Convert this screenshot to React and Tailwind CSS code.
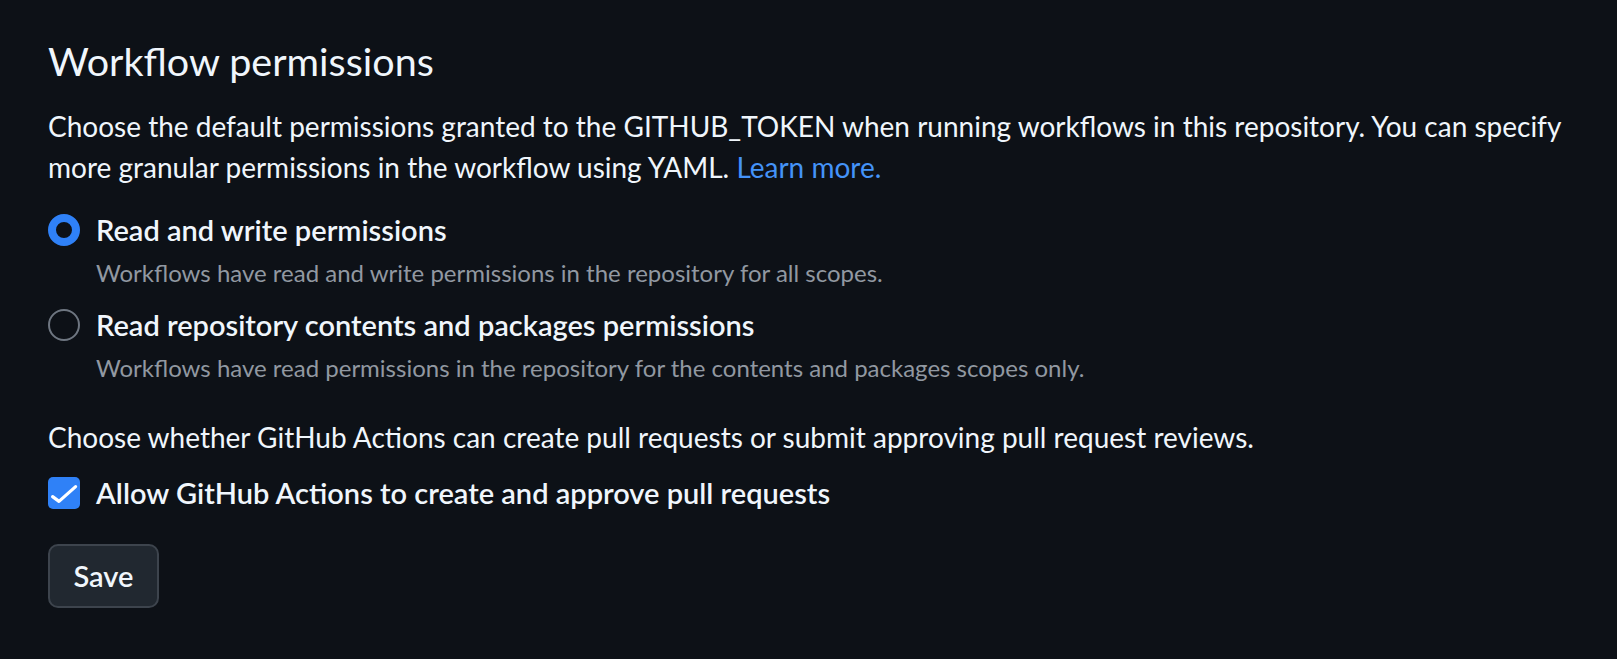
function Radio({ checked }) {
  if (checked) {
    return <span className="block w-8 h-8 shrink-0 rounded-full border-[8px] border-[#2f81f7] bg-[#0d1117]" />;
  }
  return <span className="block w-8 h-8 shrink-0 rounded-full border-2 border-[#6e7681] bg-[#0d1117]" />;
}

function Checkbox() {
  return (
    <span className="flex items-center justify-center w-8 h-8 shrink-0 rounded-[5px] bg-[#2f81f7]">
      <svg width="32" height="32" viewBox="0 0 16 16" fill="none">
        <path d="M2.3 9.8 L5.5 12.2 L13.8 4.8" stroke="#ffffff" strokeWidth="1.6" strokeLinecap="round" strokeLinejoin="round" />
      </svg>
    </span>
  );
}

function Option({ checked, label, desc, className }) {
  return (
    <div className={className}>
      <label className="flex items-center gap-4 cursor-pointer">
        <Radio checked={checked} />
        <span className="text-[29px] leading-[41px] font-semibold text-[#f0f6fc]">{label}</span>
      </label>
      <p className="mt-[5px] pl-12 text-[24px] leading-[36px] text-[#9198a1]">{desc}</p>
    </div>
  );
}

export default function App() {
  return (
    <div className="min-h-screen bg-[#0d1117] pl-12 pt-[36px] pb-12 font-['Lato',sans-serif] text-[#f0f6fc]">
      <h2 className="text-[39.5px] leading-[50px] font-normal">Workflow permissions</h2>

      <p className="mt-[20px] text-[28px] leading-[41px]">
        Choose the default permissions granted to the GITHUB_TOKEN when running workflows in this repository. You can specify
        <br />
        more granular permissions in the workflow using YAML.{" "}
        <a href="#" className="text-[#4493f8]">Learn more.</a>
      </p>

      <Option
        className="mt-[21px]"
        checked
        label="Read and write permissions"
        desc="Workflows have read and write permissions in the repository for all scopes."
      />
      <Option
        className="mt-[13px]"
        label="Read repository contents and packages permissions"
        desc="Workflows have read permissions in the repository for the contents and packages scopes only."
      />

      <p className="mt-[31px] text-[28px] leading-[41px]">
        Choose whether GitHub Actions can create pull requests or submit approving pull request reviews.
      </p>

      <label className="mt-[14px] flex items-center gap-4 cursor-pointer">
        <Checkbox />
        <span className="text-[29px] leading-[41px] font-semibold">Allow GitHub Actions to create and approve pull requests</span>
      </label>

      <button className="mt-[31px] w-[111px] h-[64px] rounded-[10px] border-2 border-[#3d444d] bg-[#212830] text-[29px] font-semibold text-[#f0f6fc]">
        Save
      </button>
    </div>
  );
}
